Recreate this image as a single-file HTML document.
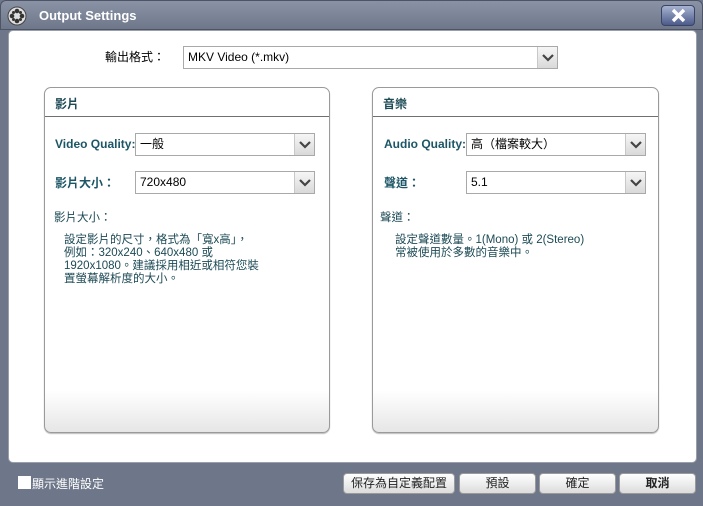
<!DOCTYPE html>
<html><head><meta charset="utf-8"><style>
*{box-sizing:border-box;margin:0;padding:0}
body{width:703px;height:506px;overflow:hidden;background:#6e7789;font-family:"Liberation Sans","Noto Sans CJK TC",sans-serif;font-size:12px;position:relative}
.abs{position:absolute}
.title{left:0;top:0;width:703px;height:30px;background:linear-gradient(#8a93a6,#6f788b);border-radius:6px 6px 0 0;border:1px solid #4c5466}
.content{left:8px;top:30px;width:689px;height:433px;background:#fff;border-radius:5px;border:1px solid #9aa0aa}
.sel{background:#fff;border:1px solid #a9a9a9;height:23px;font-size:12px;line-height:21px;padding-left:4px;color:#000}
.sel .arr{position:absolute;right:0;top:0;width:20px;height:21px;background:linear-gradient(#f6f6f6,#d9d9d9);border-left:1px solid #c8c8c8}
.panel{border:1px solid #9a9a9a;border-radius:7px;background:linear-gradient(#fff 88%,#e6e6e6);box-shadow:0 1px 1px #bbb}
.ph{position:absolute;left:0;top:0;right:0;height:29px;border-bottom:1px solid #707070;font-weight:bold;color:#1c4a55;padding:7px 0 0 10px;font-size:12px}
.lab{color:#1c5566;font-weight:bold;font-size:12px}
.desc{color:#1c4a55;font-size:11.5px;line-height:13px}
.btn{top:473px;height:21px;border-radius:4px;background:linear-gradient(#fff,#dcdcdc);border:1px solid #9a9a9a;text-align:center;line-height:19px;font-size:12px;color:#222}
</style></head><body>
<div class="abs title"></div>
<svg class="abs" style="left:7px;top:6px" width="20" height="20" viewBox="0 0 20 20"><circle cx="10" cy="10" r="9" fill="#ddd" stroke="#444"/><g fill="#333"><circle cx="10" cy="5" r="2.3"/><circle cx="10" cy="15" r="2.3"/><circle cx="5" cy="10" r="2.3"/><circle cx="15" cy="10" r="2.3"/><circle cx="6.5" cy="6.5" r="1.5"/><circle cx="13.5" cy="13.5" r="1.5"/><circle cx="13.5" cy="6.5" r="1.5"/><circle cx="6.5" cy="13.5" r="1.5"/></g></svg>
<div class="abs" style="left:39px;top:8px;color:#fff;font-weight:bold;font-size:13px">Output Settings</div>
<div class="abs" style="left:661px;top:5px;width:34px;height:21px;border-radius:4px;background:linear-gradient(#a7b3d0,#4c5b8a);border:1px solid #3b4466"></div>
<svg class="abs" style="left:670px;top:7px" width="17" height="17"><path d="M3 3L14 14M14 3L3 14" stroke="#fff" stroke-width="3.4"/></svg>
<div class="abs content"></div>
<div class="abs" style="left:105px;top:48px;color:#000">輸出格式：</div>
<div class="abs sel" style="left:183px;top:46px;width:375px">MKV Video (*.mkv)<div class="arr"><svg width="20" height="21"><path d="M5 8l5 5 5-5" stroke="#444" stroke-width="2.2" fill="none"/></svg></div></div>

<div class="abs panel" style="left:44px;top:87px;width:286px;height:346px"><div class="ph">影片</div></div>
<div class="abs lab" style="left:55px;top:137px">Video Quality:</div>
<div class="abs sel" style="left:135px;top:133px;width:180px">一般<div class="arr"><svg width="20" height="21"><path d="M5 8l5 5 5-5" stroke="#444" stroke-width="2.2" fill="none"/></svg></div></div>
<div class="abs lab" style="left:55px;top:174px">影片大小：</div>
<div class="abs sel" style="left:135px;top:171px;width:180px">720x480<div class="arr"><svg width="20" height="21"><path d="M5 8l5 5 5-5" stroke="#444" stroke-width="2.2" fill="none"/></svg></div></div>
<div class="abs desc" style="left:54px;top:212px">影片大小：</div>
<div class="abs desc" style="left:64px;top:234px;width:220px">設定影片的尺寸，格式為「寬x高」，<br>例如：320x240、640x480 或<br>1920x1080。建議採用相近或相符您裝<br>置螢幕解析度的大小。</div>

<div class="abs panel" style="left:372px;top:87px;width:287px;height:346px"><div class="ph">音樂</div></div>
<div class="abs lab" style="left:384px;top:137px">Audio Quality:</div>
<div class="abs sel" style="left:466px;top:133px;width:180px">高（檔案較大）<div class="arr"><svg width="20" height="21"><path d="M5 8l5 5 5-5" stroke="#444" stroke-width="2.2" fill="none"/></svg></div></div>
<div class="abs lab" style="left:384px;top:174px">聲道：</div>
<div class="abs sel" style="left:466px;top:171px;width:180px">5.1<div class="arr"><svg width="20" height="21"><path d="M5 8l5 5 5-5" stroke="#444" stroke-width="2.2" fill="none"/></svg></div></div>
<div class="abs desc" style="left:380px;top:212px">聲道：</div>
<div class="abs desc" style="left:395px;top:234px;width:250px">設定聲道數量。1(Mono) 或 2(Stereo)<br>常被使用於多數的音樂中。</div>

<div class="abs" style="left:18px;top:476px;width:13px;height:13px;background:#fff"></div>
<div class="abs" style="left:32px;top:475px;color:#fff;font-size:12px">顯示進階設定</div>
<div class="abs btn" style="left:343px;width:112px">保存為自定義配置</div>
<div class="abs btn" style="left:459px;width:77px">預設</div>
<div class="abs btn" style="left:539px;width:77px">確定</div>
<div class="abs btn" style="left:619px;width:77px;font-weight:bold">取消</div>
</body></html>
